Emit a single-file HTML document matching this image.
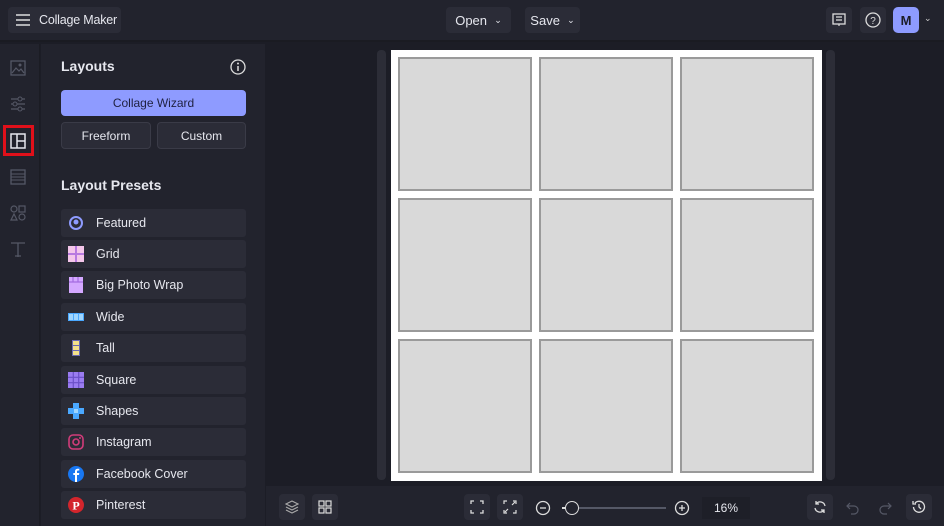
<!DOCTYPE html>
<html><head><meta charset="utf-8"><style>
*{box-sizing:border-box;margin:0;padding:0}
body{width:944px;height:526px;overflow:hidden;background:#1c1d26;font-family:"Liberation Sans",sans-serif;color:#e6e7ee;position:relative}
.abs{position:absolute}
.top{left:0;top:0;width:944px;height:42px;background:#22232d;border-bottom:2px solid #1a1b22}
.btn{position:absolute;background:#2b2c37;border-radius:4px;font-size:13px;display:flex;align-items:center;justify-content:center;color:#e6e7ee;white-space:nowrap}
.rail{left:0;top:44px;width:40px;height:482px;background:#22232d;border-right:1px solid #1b1c23}
.panel{left:41px;top:44px;width:224px;height:482px;background:#22232d}
.row{position:absolute;left:61px;width:185px;height:28px;background:#2b2c37;border-radius:3px;font-size:12.5px;display:flex;align-items:center}
.row .ic{width:16px;height:16px;margin-left:7px;margin-right:12px}
.row span{color:#e6e7ee}
.cell{position:absolute;width:134px;height:134px;background:#d9d9d9;border:2px solid #9a9a9a}
.bot{left:266px;top:486px;width:678px;height:40px;background:#22232d}
.ib{position:absolute;background:#2b2c37;border-radius:4px;width:26px;height:26px;display:flex;align-items:center;justify-content:center}
svg{display:block}
</style></head><body>
<div class="abs top"></div>
<div class="btn" style="left:8px;top:7px;width:113px;height:26px;justify-content:flex-start;padding-left:8px;font-size:12.5px">
<svg width="14" height="12"><path d="M0 1h14M0 6h14M0 11h14" stroke="#ddd" stroke-width="1.5"/></svg><span style="margin-left:9px;letter-spacing:-0.2px">Collage Maker</span></div>
<div class="btn" style="left:446px;top:7px;width:65px;height:26px">Open&nbsp;&nbsp;<span style="font-size:9px">&#8964;</span></div>
<div class="btn" style="left:525px;top:7px;width:55px;height:26px">Save&nbsp;&nbsp;<span style="font-size:9px">&#8964;</span></div>
<div class="btn" style="left:826px;top:7px;width:26px;height:26px"><svg width="14" height="14"><rect x="1" y="1" width="12" height="10" fill="none" stroke="#ddd" stroke-width="1.3"/><path d="M4 4h6M4 7h6M7 11l0 2" stroke="#ddd" stroke-width="1.2"/></svg></div>
<div class="btn" style="left:860px;top:7px;width:26px;height:26px"><svg width="16" height="16"><circle cx="8" cy="8" r="7" fill="none" stroke="#ddd" stroke-width="1.3"/><text x="8" y="12" font-size="10" text-anchor="middle" fill="#ddd" font-family="Liberation Sans">?</text></svg></div>
<div class="btn" style="left:893px;top:7px;width:26px;height:26px;background:#8e9bff;color:#1c1d26;font-weight:bold;border-radius:5px">M</div>
<div class="abs" style="left:924px;top:13px;font-size:9px;color:#ccc">&#8964;</div>

<div class="abs rail"></div>
<svg class="abs" style="left:10px;top:60px" width="16" height="16"><rect x="1" y="1" width="14" height="14" fill="none" stroke="#555866" stroke-width="1.3"/><path d="M2 13l4-5 3 3 2-2 3 4" fill="none" stroke="#555866" stroke-width="1.2"/><circle cx="10" cy="5" r="1.5" fill="#555866"/></svg>
<svg class="abs" style="left:10px;top:96px" width="16" height="16"><path d="M1 3h14M1 8h14M1 13h14" stroke="#555866" stroke-width="1.2"/><circle cx="10" cy="3" r="2" fill="#22232d" stroke="#555866"/><circle cx="5" cy="8" r="2" fill="#22232d" stroke="#555866"/><circle cx="10" cy="13" r="2" fill="#22232d" stroke="#555866"/></svg>
<div class="abs" style="left:3px;top:125px;width:31px;height:31px;border:3px solid #e0101a"></div>
<svg class="abs" style="left:10px;top:133px" width="16" height="16"><rect x="1" y="1" width="14" height="14" fill="none" stroke="#e6e7ee" stroke-width="1.5"/><path d="M7 1v14M7 8h8" stroke="#e6e7ee" stroke-width="1.5"/></svg>
<svg class="abs" style="left:10px;top:169px" width="16" height="16"><rect x="1" y="1" width="14" height="14" fill="none" stroke="#555866" stroke-width="1.3"/><path d="M1 5h14M1 8h14M1 11h14" stroke="#555866" stroke-width="1.1"/></svg>
<svg class="abs" style="left:10px;top:205px" width="16" height="16"><circle cx="4" cy="4" r="3" fill="none" stroke="#555866" stroke-width="1.2"/><rect x="9" y="1" width="6" height="6" fill="none" stroke="#555866" stroke-width="1.2"/><path d="M4 9l3 6H1z" fill="none" stroke="#555866" stroke-width="1.2"/><circle cx="12" cy="12" r="3" fill="none" stroke="#555866" stroke-width="1.2"/></svg>
<svg class="abs" style="left:10px;top:241px" width="16" height="16"><path d="M1 2h14M8 2v14M5 15h6" stroke="#555866" stroke-width="1.3"/></svg>

<div class="abs panel"></div>
<div class="abs" style="left:61px;top:58px;font-size:14px;font-weight:bold">Layouts</div>
<svg class="abs" style="left:230px;top:59px" width="16" height="16"><circle cx="8" cy="8" r="7" fill="none" stroke="#ddd" stroke-width="1.3"/><path d="M8 7v5" stroke="#ddd" stroke-width="1.5"/><circle cx="8" cy="4.5" r="1" fill="#ddd"/></svg>
<div class="btn" style="left:61px;top:90px;width:185px;height:26px;background:#8e9bff;color:#1f2140;font-size:12px">Collage Wizard</div>
<div class="btn" style="left:61px;top:122px;width:90px;height:27px;font-size:12px;border:1px solid #3a3b47">Freeform</div>
<div class="btn" style="left:157px;top:122px;width:89px;height:27px;font-size:12px;border:1px solid #3a3b47">Custom</div>
<div class="abs" style="left:61px;top:177px;font-size:14px;font-weight:bold">Layout Presets</div>

<div class="row" style="top:209px"><svg class="ic" viewBox="0 0 16 16"><circle cx="8" cy="8" r="6" fill="none" stroke="#8e9bff" stroke-width="2"/><circle cx="8" cy="7" r="2.5" fill="#8e9bff"/></svg><span>Featured</span></div>
<div class="row" style="top:240px"><svg class="ic" viewBox="0 0 16 16"><rect x="0" y="0" width="7" height="7" fill="#f4c6ea"/><rect x="9" y="0" width="7" height="7" fill="#f4c6ea"/><rect x="0" y="9" width="7" height="7" fill="#f4c6ea"/><rect x="9" y="9" width="7" height="7" fill="#f4c6ea"/><path d="M8 0v16M0 8h16" stroke="#b87ae0" stroke-width="2"/></svg><span>Grid</span></div>
<div class="row" style="top:271px"><svg class="ic" viewBox="0 0 16 16"><rect x="1" y="0" width="14" height="16" fill="#d4a8ff"/><path d="M1 5h14M5 0v5M10 0v5" stroke="#a46be0" stroke-width="1.2"/></svg><span>Big Photo Wrap</span></div>
<div class="row" style="top:303px"><svg class="ic" viewBox="0 0 16 16"><rect x="0" y="4" width="16" height="8" fill="#4aa8ff"/><rect x="1" y="5" width="4" height="6" fill="#9fd6ff"/><rect x="6" y="5" width="4" height="6" fill="#9fd6ff"/><rect x="11" y="5" width="4" height="6" fill="#9fd6ff"/></svg><span>Wide</span></div>
<div class="row" style="top:334px"><svg class="ic" viewBox="0 0 16 16"><rect x="4" y="0" width="8" height="16" fill="#6a6ab0"/><rect x="5" y="1" width="6" height="4" fill="#f5e18a"/><rect x="5" y="6" width="6" height="4" fill="#f5e18a"/><rect x="5" y="11" width="6" height="4" fill="#f5e18a"/></svg><span>Tall</span></div>
<div class="row" style="top:366px"><svg class="ic" viewBox="0 0 16 16"><rect x="0" y="0" width="16" height="16" fill="#9a7cf0"/><path d="M5.3 0v16M10.7 0v16M0 5.3h16M0 10.7h16" stroke="#6b4fc8" stroke-width="1.2"/></svg><span>Square</span></div>
<div class="row" style="top:397px"><svg class="ic" viewBox="0 0 16 16"><rect x="5" y="0" width="6" height="16" fill="#4aa8ff"/><rect x="0" y="5" width="16" height="6" fill="#4aa8ff"/><rect x="6" y="6" width="4" height="4" fill="#9fd6ff"/></svg><span>Shapes</span></div>
<div class="row" style="top:428px"><svg class="ic" viewBox="0 0 16 16"><rect x="1" y="1" width="14" height="14" rx="4" fill="none" stroke="#d13c7a" stroke-width="1.6"/><circle cx="8" cy="8" r="3" fill="none" stroke="#d13c7a" stroke-width="1.6"/><circle cx="12" cy="4" r="1" fill="#d13c7a"/></svg><span>Instagram</span></div>
<div class="row" style="top:460px"><svg class="ic" viewBox="0 0 16 16"><circle cx="8" cy="8" r="8" fill="#1877f2"/><path d="M9 16V9h2l.3-2H9V5.5c0-.6.3-1 1-1h1.3V2.7H9.8C8 2.7 7 3.8 7 5.4V7H5.3v2H7v7" fill="#fff"/></svg><span>Facebook Cover</span></div>
<div class="row" style="top:491px"><svg class="ic" viewBox="0 0 16 16"><circle cx="8" cy="8" r="8" fill="#d3252c"/><text x="8" y="12.5" font-size="12" font-weight="bold" text-anchor="middle" fill="#fff" font-family="Liberation Serif">P</text></svg><span>Pinterest</span></div>

<div class="abs" style="left:377px;top:50px;width:9px;height:430px;background:#2c2d37;border-radius:4px"></div>
<div class="abs" style="left:826px;top:50px;width:9px;height:430px;background:#2c2d37;border-radius:4px"></div>
<div class="abs" style="left:391px;top:50px;width:431px;height:431px;background:#fff"></div>
<div class="cell" style="left:398px;top:57px"></div><div class="cell" style="left:539px;top:57px"></div><div class="cell" style="left:680px;top:57px"></div>
<div class="cell" style="left:398px;top:198px"></div><div class="cell" style="left:539px;top:198px"></div><div class="cell" style="left:680px;top:198px"></div>
<div class="cell" style="left:398px;top:339px"></div><div class="cell" style="left:539px;top:339px"></div><div class="cell" style="left:680px;top:339px"></div>

<div class="abs bot"></div>
<div class="ib" style="left:279px;top:494px"><svg width="14" height="14"><path d="M7 1l6 3-6 3-6-3zM1 7l6 3 6-3M1 10l6 3 6-3" fill="none" stroke="#aaa" stroke-width="1.1"/></svg></div>
<div class="ib" style="left:312px;top:494px"><svg width="14" height="14"><rect x="1" y="1" width="5" height="5" fill="none" stroke="#ddd" stroke-width="1.2"/><rect x="8" y="1" width="5" height="5" fill="none" stroke="#ddd" stroke-width="1.2"/><rect x="1" y="8" width="5" height="5" fill="none" stroke="#ddd" stroke-width="1.2"/><rect x="8" y="8" width="5" height="5" fill="none" stroke="#ddd" stroke-width="1.2"/></svg></div>
<div class="ib" style="left:464px;top:494px"><svg width="14" height="14"><path d="M1 4V1h3M10 1h3v3M13 10v3h-3M4 13H1v-3" fill="none" stroke="#ddd" stroke-width="1.3"/></svg></div>
<div class="ib" style="left:497px;top:494px"><svg width="14" height="14"><path d="M1 4V1h3M10 1h3v3M13 10v3h-3M4 13H1v-3M9 5l3-3M5 9l-3 3" fill="none" stroke="#ddd" stroke-width="1.2"/></svg></div>
<svg class="abs" style="left:535px;top:500px" width="16" height="16"><circle cx="8" cy="8" r="6.5" fill="none" stroke="#ddd" stroke-width="1.3"/><path d="M5 8h6" stroke="#ddd" stroke-width="1.3"/></svg>
<div class="abs" style="left:562px;top:507px;width:104px;height:2px;background:#555866"></div>
<div class="abs" style="left:562px;top:507px;width:6px;height:2px;background:#ddd"></div>
<div class="abs" style="left:565px;top:501px;width:14px;height:14px;border-radius:50%;border:1.5px solid #ddd;background:#22232d"></div>
<svg class="abs" style="left:674px;top:500px" width="16" height="16"><circle cx="8" cy="8" r="6.5" fill="none" stroke="#ddd" stroke-width="1.3"/><path d="M5 8h6M8 5v6" stroke="#ddd" stroke-width="1.3"/></svg>
<div class="abs" style="left:702px;top:497px;width:48px;height:22px;background:#1e1f28;font-size:12px;display:flex;align-items:center;justify-content:center">16%</div>
<div class="ib" style="left:807px;top:494px"><svg width="14" height="14"><path d="M12 6A5 5 0 0 0 3 4M2 8a5 5 0 0 0 9 2M3 1v3h3M11 13v-3H8" fill="none" stroke="#ddd" stroke-width="1.3"/></svg></div>
<svg class="abs" style="left:846px;top:501px" width="14" height="14"><path d="M4 2L1 5l3 3M1 5h7a4 4 0 0 1 0 8H5" fill="none" stroke="#555866" stroke-width="1.2"/></svg>
<svg class="abs" style="left:878px;top:501px" width="14" height="14"><path d="M10 2l3 3-3 3M13 5H6a4 4 0 0 0 0 8h3" fill="none" stroke="#555866" stroke-width="1.2"/></svg>
<div class="ib" style="left:906px;top:494px"><svg width="14" height="14"><path d="M3 3a5.5 5.5 0 1 1-1.5 4M1 1v3h3M7 4v3l2 2" fill="none" stroke="#ddd" stroke-width="1.3"/></svg></div>
</body></html>
